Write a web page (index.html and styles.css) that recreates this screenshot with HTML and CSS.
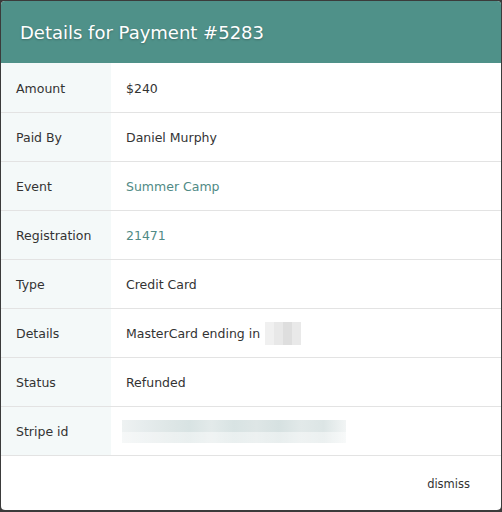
FILE: index.html
```html
<!DOCTYPE html>
<html>
<head>
<meta charset="utf-8">
<link rel="stylesheet" href="styles.css">
</head>
<body>
<div class="modal">
  <div class="modal-header">
    <h1 class="title">Details for Payment #5283</h1>
  </div>
  <div class="rows">
    <div class="row"><div class="label">Amount</div><div class="value">$240</div></div>
    <div class="row"><div class="label">Paid By</div><div class="value">Daniel Murphy</div></div>
    <div class="row"><div class="label">Event</div><div class="value"><a class="link">Summer Camp</a></div></div>
    <div class="row"><div class="label">Registration</div><div class="value"><a class="link">21471</a></div></div>
    <div class="row"><div class="label">Type</div><div class="value">Credit Card</div></div>
    <div class="row"><div class="label">Details</div><div class="value">MasterCard ending in <span class="blur-last4"><i class="px p1"></i><i class="px p2"></i><i class="px p3"></i><i class="px p4"></i></span></div></div>
    <div class="row"><div class="label">Status</div><div class="value">Refunded</div></div>
    <div class="row"><div class="label">Stripe id</div><div class="value"><span class="blur-id"></span></div></div>
  </div>
  <div class="modal-footer">
    <a class="dismiss">dismiss</a>
  </div>
</div>
</body>
</html>
```
FILE: styles.css
```css
html, body {
  margin: 0;
  padding: 0;
  background: #3b3b3b;
  height: 512px;
  overflow: hidden;
}
body {
  padding: 1px 1px 0 1px;
  box-sizing: border-box;
  font-family: "DejaVu Sans", Verdana, sans-serif;
  color: #333;
}
.modal {
  background: #fff;
  border-radius: 4px;
  overflow: hidden;
  height: 509px;
  display: flex;
  flex-direction: column;
}
.modal-header {
  background: #4f9189;
  height: 62px;
  display: flex;
  align-items: center;
  padding: 0 19px;
  flex: none;
}
.title {
  margin: 0;
  font-weight: normal;
  font-size: 18px;
  color: #fff;
  text-shadow: 0 1px 2px rgba(0,0,0,0.25);
  letter-spacing: 0;
}
.rows {
  display: flex;
  flex-direction: column;
}
.row {
  display: flex;
  height: 48px;
  border-bottom: 1px solid #e3e3e3;
}
.row:first-child {
  height: 49px;
}
.label {
  width: 95px;
  flex: none;
  background: #f4f9f9;
  padding-left: 15px;
  padding-top: 1px;
  display: flex;
  align-items: center;
  font-size: 12.5px;
  color: #333;
}
.value {
  padding-left: 15px;
  padding-top: 1px;
  display: flex;
  align-items: center;
  font-size: 12.5px;
  color: #333;
  white-space: pre;
}
.link {
  color: #508a85;
  text-decoration: none;
}
.blur-last4 {
  display: inline-flex;
  height: 23px;
  margin-left: 1px;
}
.px {
  display: block;
  width: 9px;
  height: 23px;
}
.p1 { background: #f0f0f0; }
.p2 { background: #e8e8e8; }
.p3 { background: #dedede; }
.p4 { background: #e9e9e9; }
.blur-id {
  display: block;
  width: 224px;
  height: 23px;
  margin-left: -4px;
  background:
    linear-gradient(to bottom, rgba(255,255,255,0) 50%, rgba(255,255,255,0.45) 50%),
    linear-gradient(to right, #eef2f2 0%, #e6eced 10%, #dfe7e7 20%, #d8e3e3 30%, #e3eaea 40%, #d8e3e3 50%, #dee6e6 60%, #d6e1e1 70%, #e2e9e9 80%, #dce5e5 90%, #f2f5f5 100%);
}
.modal-footer {
  flex: 1;
  display: flex;
  justify-content: flex-end;
  align-items: center;
  padding-right: 31px;
  padding-top: 2px;
}
.dismiss {
  font-size: 11.5px;
  color: #333;
  text-decoration: none;
}
```
